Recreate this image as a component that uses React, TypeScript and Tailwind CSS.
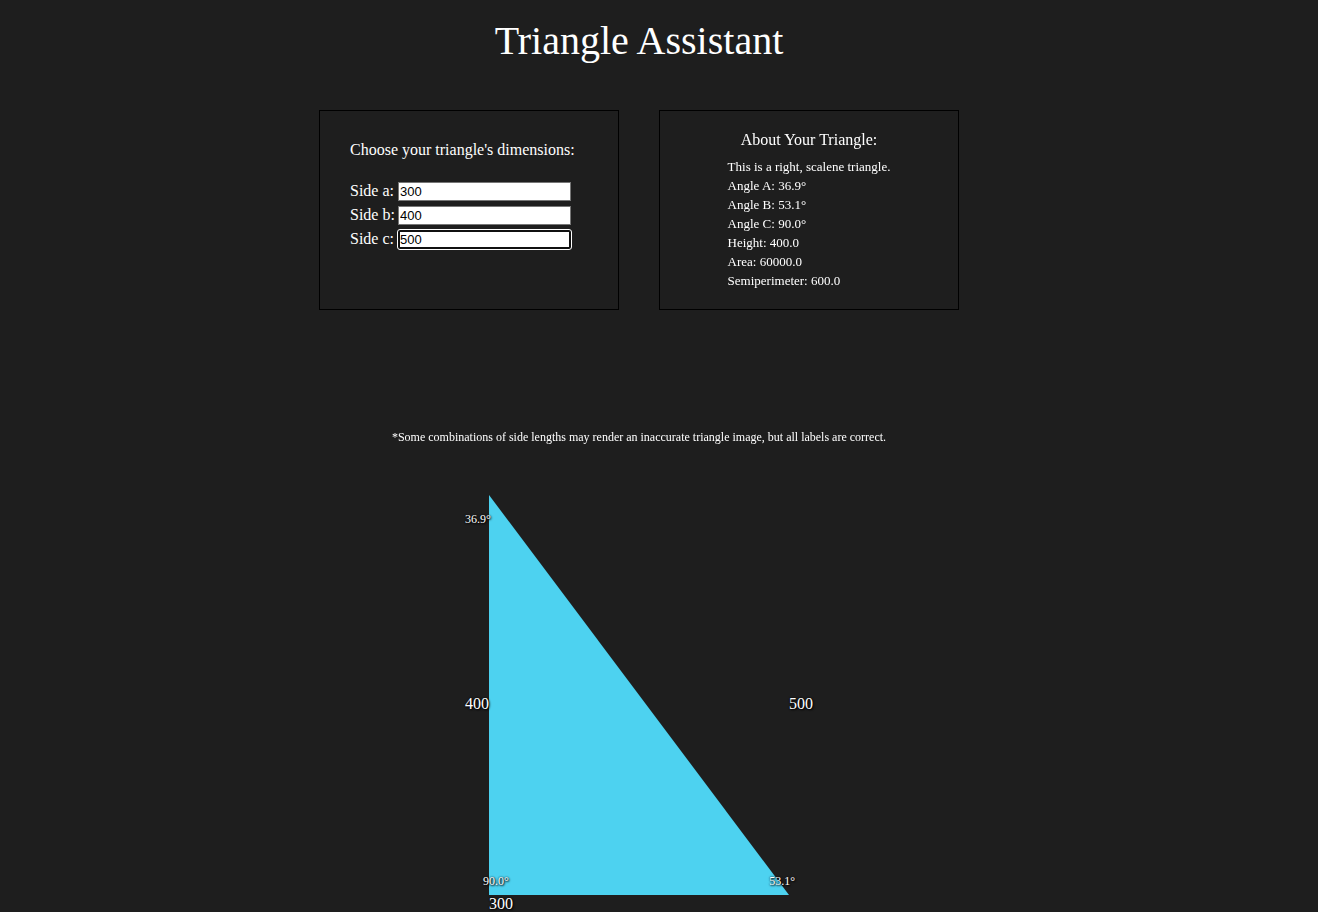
import { useState } from "react";

type SideKey = "a" | "b" | "c";
type Sides = Record<SideKey, string>;

const SIDE_KEYS: SideKey[] = ["a", "b", "c"];
const SERIF = "font-['Liberation_Serif','Times_New_Roman',serif]";

const toDegrees = (radians: number) => (radians * 180) / Math.PI;

// Angle opposite to the first side, by the law of cosines.
const angleOpposite = (side: number, p: number, q: number) =>
  toDegrees(Math.acos((p * p + q * q - side * side) / (2 * p * q)));

function solve(a: number, b: number, c: number) {
  const angleA = angleOpposite(a, b, c);
  const angleB = angleOpposite(b, a, c);
  const angleC = angleOpposite(c, a, b);
  const semi = (a + b + c) / 2;
  const area = Math.sqrt(semi * (semi - a) * (semi - b) * (semi - c));
  const widest = Math.max(angleA, angleB, angleC);
  const byAngle = Math.abs(widest - 90) < 0.01 ? "right" : widest > 90 ? "obtuse" : "acute";
  const distinct = new Set([a, b, c]).size;
  const bySide = distinct === 1 ? "equilateral" : distinct === 2 ? "isosceles" : "scalene";
  return { a, b, c, angleA, angleB, angleC, semi, area, height: (2 * area) / a, kind: `${byAngle}, ${bySide}` };
}

type Triangle = ReturnType<typeof solve>;

function DimensionsPanel({ sides, onChange }: { sides: Sides; onChange: (key: SideKey, value: string) => void }) {
  return (
    <form className="h-[200px] w-[300px] border border-black pl-[30px] pt-[30px] text-base leading-[18px]">
      <p className="whitespace-nowrap">Choose your triangle's dimensions:</p>
      <div className="mt-5 flex flex-col">
        {SIDE_KEYS.map((key) => (
          <div key={key} className="flex h-6 items-center">
            <label htmlFor={`side-${key}`} className="w-12 shrink-0 whitespace-nowrap">
              Side {key}:
            </label>
            <input
              id={`side-${key}`}
              type="text"
              autoFocus={key === "c"}
              value={sides[key]}
              onChange={(event) => onChange(key, event.target.value)}
              className="h-[19px] w-[173px] border border-[#767676] bg-white px-px font-['Liberation_Sans',Arial,sans-serif] text-[13px] text-black focus:rounded-xs focus:border-2 focus:border-[#101010] focus:px-0 focus:outline focus:outline-white"
            />
          </div>
        ))}
      </div>
    </form>
  );
}

function AboutPanel({ triangle }: { triangle: Triangle }) {
  const facts = [
    `This is a ${triangle.kind} triangle.`,
    `Angle A: ${triangle.angleA.toFixed(1)}°`,
    `Angle B: ${triangle.angleB.toFixed(1)}°`,
    `Angle C: ${triangle.angleC.toFixed(1)}°`,
    `Height: ${triangle.height.toFixed(1)}`,
    `Area: ${triangle.area.toFixed(1)}`,
    `Semiperimeter: ${triangle.semi.toFixed(1)}`,
  ];
  return (
    <section className="flex h-[200px] w-[300px] flex-col items-center border border-black pt-5">
      <h2 className="text-base leading-[18px]">About Your Triangle:</h2>
      <ul className="mt-2 text-[13px] leading-[19px]">
        {facts.map((fact) => (
          <li key={fact}>{fact}</li>
        ))}
      </ul>
    </section>
  );
}

function TriangleFigure({ triangle }: { triangle: Triangle }) {
  const { a, b, c, height } = triangle;
  const apex = (a * a + b * b - c * c) / (2 * a);
  const shadow = "[text-shadow:1px_1px_2px_black,0_0_2px_black]";
  return (
    <figure className="relative" style={{ width: a, height }}>
      <svg className="block h-full w-full overflow-visible" viewBox={`0 0 ${a} ${height}`} aria-hidden="true">
        <polygon points={`${apex},0 0,${height} ${a},${height}`} fill="#4dd2f0" />
      </svg>
      <span className={`absolute -left-6 top-4 text-xs ${shadow}`}>{triangle.angleA.toFixed(1)}°</span>
      <span className={`absolute -left-1.5 bottom-1.5 text-xs ${shadow}`}>{triangle.angleC.toFixed(1)}°</span>
      <span className={`absolute -right-1.5 bottom-1.5 text-xs ${shadow}`}>{triangle.angleB.toFixed(1)}°</span>
      <span className={`absolute right-full top-1/2 text-base leading-[18px] ${shadow}`}>{b}</span>
      <span className={`absolute left-full top-1/2 text-base leading-[18px] ${shadow}`}>{c}</span>
      <span className={`absolute left-0 top-full text-base leading-[17px] ${shadow}`}>{a}</span>
    </figure>
  );
}

export default function App() {
  const [sides, setSides] = useState<Sides>({ a: "300", b: "400", c: "500" });
  const triangle = solve(Number(sides.a), Number(sides.b), Number(sides.c));

  return (
    <main className={`flex min-h-screen flex-col items-center bg-[#1e1e1e] pr-10 text-white ${SERIF}`}>
      <h1 className="mt-4 text-[40px] leading-[50px]">Triangle Assistant</h1>
      <div className="mt-11 flex flex-wrap justify-center gap-10">
        <DimensionsPanel sides={sides} onChange={(key, value) => setSides({ ...sides, [key]: value })} />
        <AboutPanel triangle={triangle} />
      </div>
      <p className="mb-[50px] mt-[119px] text-xs leading-4">
        *Some combinations of side lengths may render an inaccurate triangle image, but all labels are correct.
      </p>
      {triangle.area > 0 && <TriangleFigure triangle={triangle} />}
    </main>
  );
}
